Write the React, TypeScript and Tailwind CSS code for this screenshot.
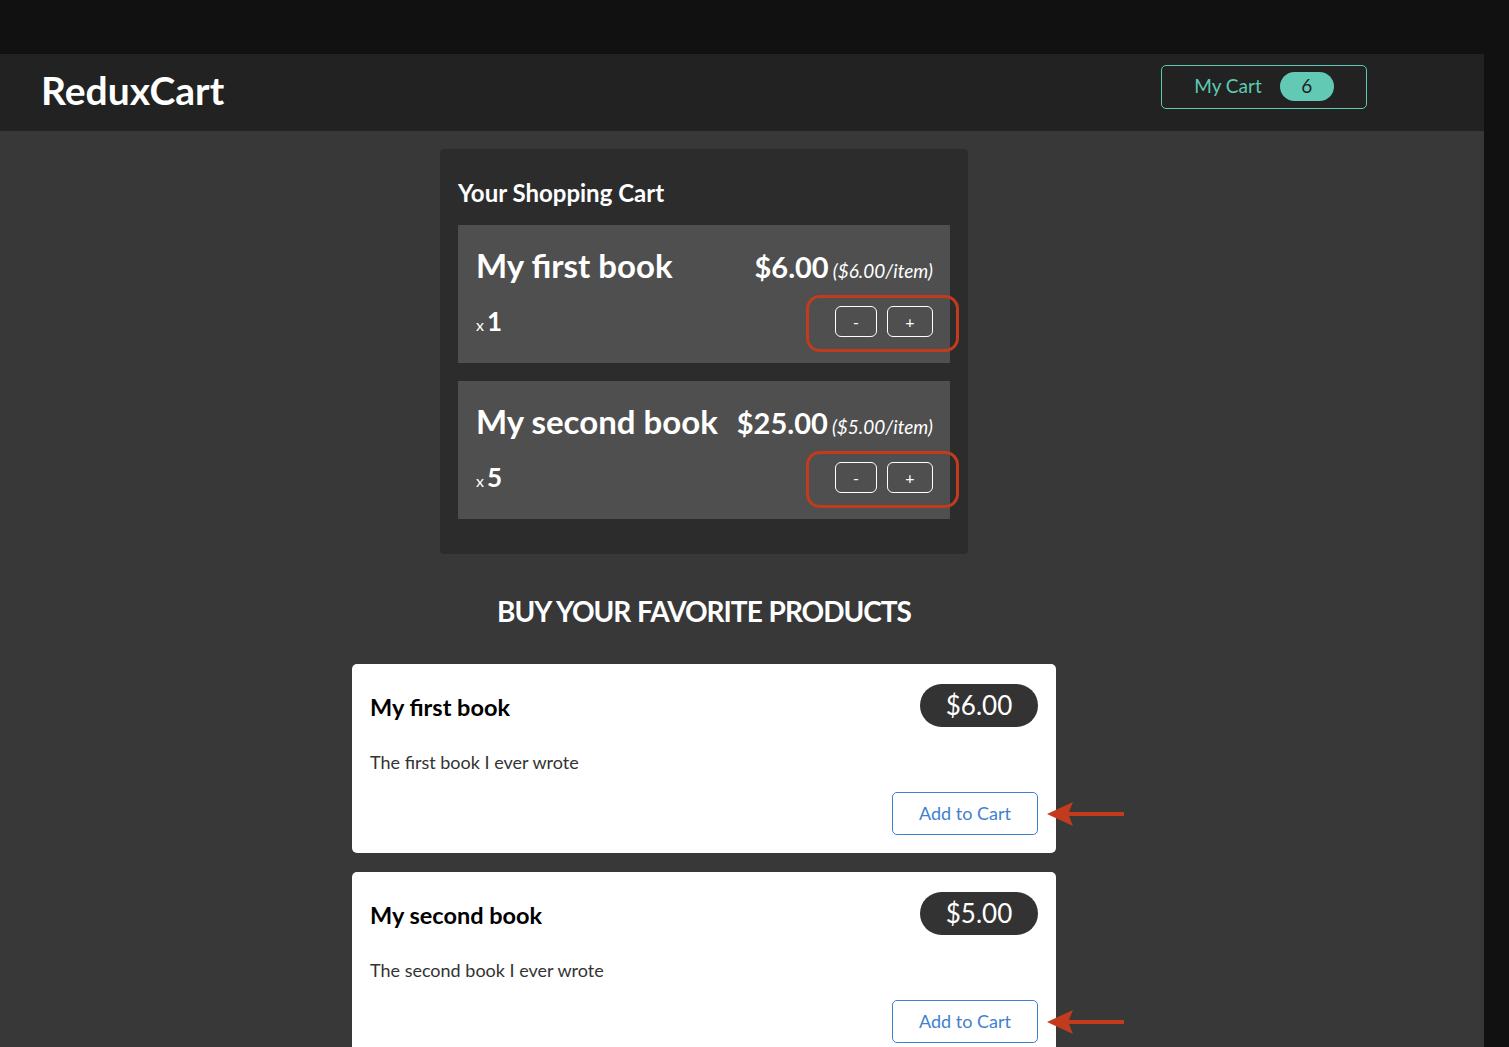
import React from 'react';

interface CartItem {
    title: string;
    quantity: number;
    total: number;
    price: number;
}

interface Product {
    id: string;
    title: string;
    price: number;
    description: string;
}

const cartItems: CartItem[] = [
    { title: 'My first book', quantity: 1, total: 6, price: 6 },
    { title: 'My second book', quantity: 5, total: 25, price: 5 },
];

const products: Product[] = [
    { id: 'p1', title: 'My first book', price: 6, description: 'The first book I ever wrote' },
    { id: 'p2', title: 'My second book', price: 5, description: 'The second book I ever wrote' },
];

const font = { fontFamily: 'Lato, "Open Sans", sans-serif' };

const Arrow: React.FC = () => (
    <svg className="absolute left-full top-1/2 -translate-y-1/2 ml-[9px]" width="78" height="28" viewBox="0 0 78 28">
        <path d="M0 14 L26 2 L22 12 L77 12 L77 16 L22 16 L26 26 Z" fill="#c23b1d" />
    </svg>
);

const Header: React.FC = () => (
    <header className="h-[77px] bg-[#222222] flex items-center pl-[41px] pr-[117px]">
        <h1 className="text-[39px] font-bold text-white leading-none mb-[4px]">ReduxCart</h1>
        <button className="ml-auto mb-[12px] w-[206px] h-[44px] border border-[#5fc9b3] rounded-[5px] flex items-center justify-center gap-[18px] text-[#5fc9b3] text-[19px]">
            <span>My Cart</span>
            <span className="w-[54px] h-[29px] rounded-full bg-[#62cab4] text-[#1e1e1e] flex items-center justify-center">6</span>
        </button>
    </header>
);

const CartRow: React.FC<{ item: CartItem }> = ({ item }) => (
    <li className="bg-[#4f4f4f] pt-[16px] pb-[26px] pl-[18px] pr-[17px]">
        <div className="flex items-baseline justify-between h-[44px]">
            <h3 className="text-[33px] font-bold text-white">{item.title}</h3>
            <div className="text-white">
                <span className="text-[29px] font-bold">${item.total.toFixed(2)}</span>{' '}
                <span className="text-[19px] italic">(${item.price.toFixed(2)}/item)</span>
            </div>
        </div>
        <div className="flex items-center justify-between mt-[21px] h-[31px]">
            <div className="text-white flex items-baseline">
                <span className="text-[16px] mr-[3px]">x</span>
                <span className="text-[26px] font-bold">{item.quantity}</span>
            </div>
            <div className="relative flex gap-[10px]">
                <button className="w-[42px] h-[31px] border border-white rounded-[6px] text-white text-[16px] leading-none">-</button>
                <button className="w-[46px] h-[31px] border border-white rounded-[6px] text-white text-[16px] leading-none">+</button>
                <span className="absolute left-[-29px] right-[-26px] top-[-11px] bottom-[-15px] border-[3px] border-[#c23b1d] rounded-[14px]" />
            </div>
        </div>
    </li>
);

const ProductCard: React.FC<{ product: Product }> = ({ product }) => (
    <li className="bg-white rounded-[5px] pt-[20px] pb-[18px] px-[18px]">
        <div className="flex items-center justify-between">
            <h3 className="text-[23.5px] font-bold text-black pt-[5px]">{product.title}</h3>
            <span className="h-[43px] w-[118px] rounded-full bg-[#333333] text-white text-[26px] flex items-center justify-center">
                ${product.price.toFixed(2)}
            </span>
        </div>
        <p className="text-[18px] text-[#333333] mt-[22px] leading-[27px]">{product.description}</p>
        <div className="flex justify-end mt-[16px]">
            <div className="relative">
                <button className="w-[146px] h-[43px] border border-[#3f7fd0] rounded-[5px] text-[#3f7fd0] text-[18px]">
                    Add to Cart
                </button>
                <Arrow />
            </div>
        </div>
    </li>
);

const App: React.FC = () => {
    return (
        <div className="min-h-screen bg-[#111111] flex flex-col" style={font}>
            <div className="h-[54px] shrink-0" />
            <div className="flex flex-1">
                <div className="w-[1484px] bg-[#383838] flex flex-col">
                    <Header />
                    <main className="w-[1408px] flex flex-col items-center pt-[18px] pb-[40px]">
                        <section className="w-[528px] bg-[#2c2c2c] rounded-[4px] pt-[26px] pb-[35px] px-[18px]">
                            <h2 className="text-[24px] font-bold text-white leading-[36px] mb-[14px]">Your Shopping Cart</h2>
                            <ul className="flex flex-col gap-[18px]">
                                {cartItems.map((item) => (
                                    <CartRow key={item.title} item={item} />
                                ))}
                            </ul>
                        </section>
                        <h2 className="mt-[37px] text-[28px] tracking-[-1px] [word-spacing:1px] font-bold text-white leading-[40px]">BUY YOUR FAVORITE PRODUCTS</h2>
                        <ul className="w-[704px] mt-[33px] flex flex-col gap-[19px]">
                            {products.map((product) => (
                                <ProductCard key={product.id} product={product} />
                            ))}
                        </ul>
                    </main>
                </div>
            </div>
        </div>
    );
};

export default App;
